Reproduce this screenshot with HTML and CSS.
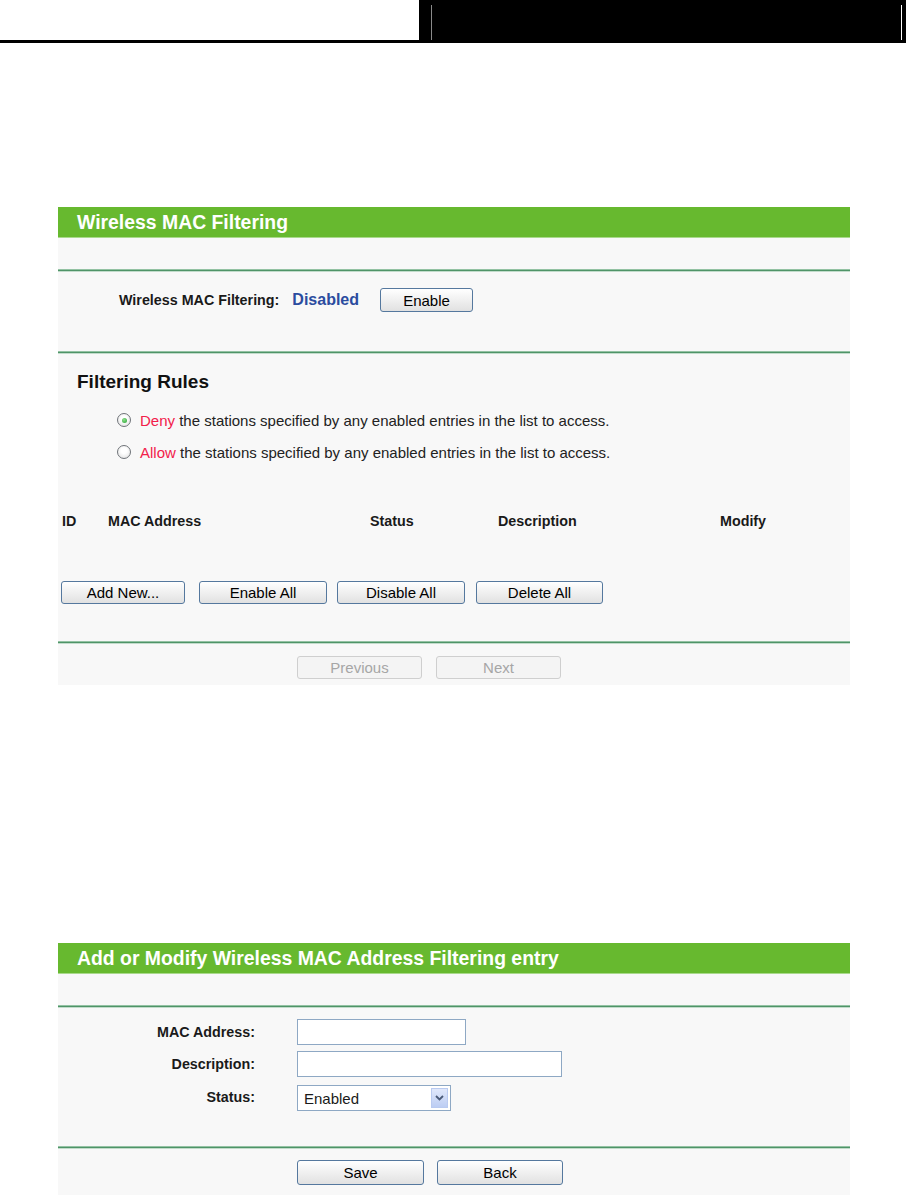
FILE: index.html
```html
<!DOCTYPE html>
<html lang="en">
<head>
    <meta charset="UTF-8">
    <meta name="viewport" content="width=device-width, initial-scale=1.0">
    <title>Wireless MAC Filtering</title>
    <link rel="stylesheet" href="styles.css">
</head>
<body>
<header class="top">
    <div class="top-left"></div>
    <div class="top-right">
        <span class="rule-grey"></span>
        <span class="rule-white"></span>
    </div>
</header>
<main class="page">
    <!-- Wireless MAC Filtering -->
    <section class="panel panel-filter">
        <h1 class="panel-title">Wireless MAC Filtering</h1>
        <div class="panel-gap"></div>
        <div class="sep"></div>
        <div class="state-row">
            <span class="state-label">Wireless MAC Filtering:</span>
            <span class="state-value">Disabled</span>
            <button class="btn btn-enable">Enable</button>
        </div>
        <div class="sep"></div>
        <div class="rules">
            <h2>Filtering Rules</h2>
            <label class="radio-row"><span class="radio checked"></span><span class="red">Deny</span>&nbsp;the stations specified by any enabled entries in the list to access.</label>
            <label class="radio-row"><span class="radio"></span><span class="red">Allow</span>&nbsp;the stations specified by any enabled entries in the list to access.</label>
        </div>
        <div class="list-head">
            <span>ID</span>
            <span>MAC Address</span>
            <span>Status</span>
            <span>Description</span>
            <span>Modify</span>
        </div>
        <div class="actions">
            <button class="btn btn-add">Add New...</button>
            <button class="btn btn-ena">Enable All</button>
            <button class="btn btn-dis">Disable All</button>
            <button class="btn btn-del">Delete All</button>
        </div>
        <div class="sep"></div>
        <div class="pager">
            <button class="btn btn-off" disabled>Previous</button>
            <button class="btn btn-off" disabled>Next</button>
        </div>
    </section>

    <!-- Add or Modify entry -->
    <section class="panel panel-entry">
        <h1 class="panel-title">Add or Modify Wireless MAC Address Filtering entry</h1>
        <div class="panel-gap"></div>
        <div class="sep"></div>
        <div class="entry-form">
            <label class="form-label">MAC Address:</label>
            <div><input class="field field-mac" type="text"></div>
            <label class="form-label">Description:</label>
            <div><input class="field field-desc" type="text"></div>
            <label class="form-label">Status:</label>
            <div class="select">
                <span class="select-text">Enabled</span>
                <span class="select-arrow">
                    <svg width="9" height="6" viewBox="0 0 9 6"><path d="M1 1 L4.5 4.5 L8 1" fill="none" stroke="#4a5a78" stroke-width="1.8"/></svg>
                </span>
            </div>
        </div>
        <div class="sep"></div>
        <div class="entry-buttons">
            <button class="btn btn-save">Save</button>
            <button class="btn btn-back">Back</button>
        </div>
    </section>
</main>
</body>
</html>
```

FILE: styles.css
```css
body, html {
    margin: 0;
    padding: 0;
    font-family: "Liberation Sans", Arial, sans-serif;
    background-color: #fff;
    color: #1a1a1a;
}

/* top strip */
.top {
    display: flex;
    height: 43px;
}

.top-left {
    width: 419px;
    height: 43px;
    box-sizing: border-box;
    border-bottom: 3px solid #000;
}

.top-right {
    flex: 1;
    background-color: #000;
    display: flex;
    padding: 5px 0 3px 12px;
}

.rule-grey {
    width: 1px;
    background-color: #8a8a8a;
}

.rule-white {
    width: 1px;
    margin-left: auto;
    margin-right: 4px;
    background-color: #fff;
}

.page {
    padding: 164px 56px 0 58px;
}

.panel {
    background-color: #f8f8f8;
}

.panel-filter {
    margin-bottom: 258px;
}

.panel-title {
    margin: 0;
    height: 30px;
    line-height: 30px;
    padding-left: 19px;
    background-color: #67b92f;
    border-bottom: 1px solid #a9d98c;
    color: #fff;
    font-size: 19.4px;
    font-weight: bold;
}

.panel-gap {
    height: 31px;
}

.sep {
    height: 1px;
    background-color: #4f9468;
    border-top: 1px solid #93c2a3;
    border-bottom: 1px solid #c2dccb;
}

/* status row */
.state-row {
    display: flex;
    align-items: center;
    height: 24px;
    padding: 16px 0 39px 61px;
}

.state-label {
    font-size: 14.3px;
    font-weight: bold;
}

.state-value {
    margin-left: 13px;
    font-size: 16px;
    font-weight: bold;
    color: #2b4c9f;
}

.btn {
    height: 24px;
    padding: 0;
    border: 1px solid #55789e;
    border-radius: 3px;
    background: linear-gradient(#ffffff, #f0f0f0 50%, #e1e1e1);
    font-family: "Liberation Sans", Arial, sans-serif;
    font-size: 15px;
    color: #000;
}

.btn-enable {
    width: 93px;
    margin-left: 21px;
}

/* filtering rules */
.rules {
    padding-top: 16px;
}

.rules h2 {
    margin: 0 0 10px 0;
    padding-left: 19px;
    height: 24px;
    line-height: 24px;
    font-size: 19px;
    font-weight: bold;
    color: #111;
}

.radio-row {
    display: flex;
    align-items: center;
    height: 32px;
    padding-left: 59px;
    font-size: 15px;
    color: #222;
}

.radio {
    width: 12px;
    height: 12px;
    margin-right: 9px;
    border: 1px solid #6f7378;
    border-radius: 50%;
    background: radial-gradient(circle at 50% 40%, #ffffff 30%, #dcdcdc 100%);
    display: flex;
    align-items: center;
    justify-content: center;
}

.radio.checked::after {
    content: "";
    width: 5px;
    height: 5px;
    border-radius: 50%;
    background: radial-gradient(circle at 40% 35%, #8ee08a, #24a032);
}

.red {
    color: #f2204a;
}

/* list header */
.list-head {
    display: grid;
    grid-template-columns: 46px 262px 128px 222px 1fr;
    margin-top: 41px;
    padding-left: 4px;
    height: 24px;
    line-height: 24px;
    font-size: 14.3px;
    font-weight: bold;
}

.actions {
    display: flex;
    padding: 48px 0 37px 3px;
}

.actions .btn {
    height: 23px;
}

.btn-add {
    width: 124px;
}

.btn-ena {
    width: 128px;
    margin-left: 14px;
}

.btn-dis {
    width: 128px;
    margin-left: 10px;
}

.btn-del {
    width: 127px;
    margin-left: 11px;
}

.pager {
    display: flex;
    gap: 14px;
    padding: 12px 0 6px 239px;
}

.pager .btn-off {
    width: 125px;
    height: 23px;
    border-color: #cfcfcf;
    background: #f4f4f4;
    color: #a6a6a6;
}

/* entry form */
.entry-form {
    display: grid;
    grid-template-columns: 197px 1fr;
    column-gap: 42px;
    row-gap: 6px;
    padding: 11px 0 35px 0;
}

.form-label {
    text-align: right;
    align-self: center;
    font-size: 14.3px;
    font-weight: bold;
}

.field {
    display: block;
    height: 26px;
    box-sizing: border-box;
    border: 1px solid #8ea8c4;
    background-color: #fff;
    margin: 0;
}

.field-mac {
    width: 169px;
}

.field-desc {
    width: 265px;
}

.select {
    display: flex;
    align-items: center;
    width: 154px;
    height: 26px;
    box-sizing: border-box;
    margin-top: 2px;
    border: 1px solid #8ea8c4;
    background-color: #fff;
}

.select-text {
    flex: 1;
    padding-left: 6px;
    font-size: 15px;
}

.select-arrow {
    width: 17px;
    height: 20px;
    margin-right: 2px;
    box-sizing: border-box;
    border: 1px solid #b9caf0;
    background: linear-gradient(#e0e8fb, #bccdf3);
    display: flex;
    align-items: center;
    justify-content: center;
}

.entry-buttons {
    display: flex;
    gap: 13px;
    padding: 11px 0 10px 239px;
}

.btn-save {
    width: 127px;
    height: 25px;
}

.btn-back {
    width: 126px;
    height: 25px;
}
```
